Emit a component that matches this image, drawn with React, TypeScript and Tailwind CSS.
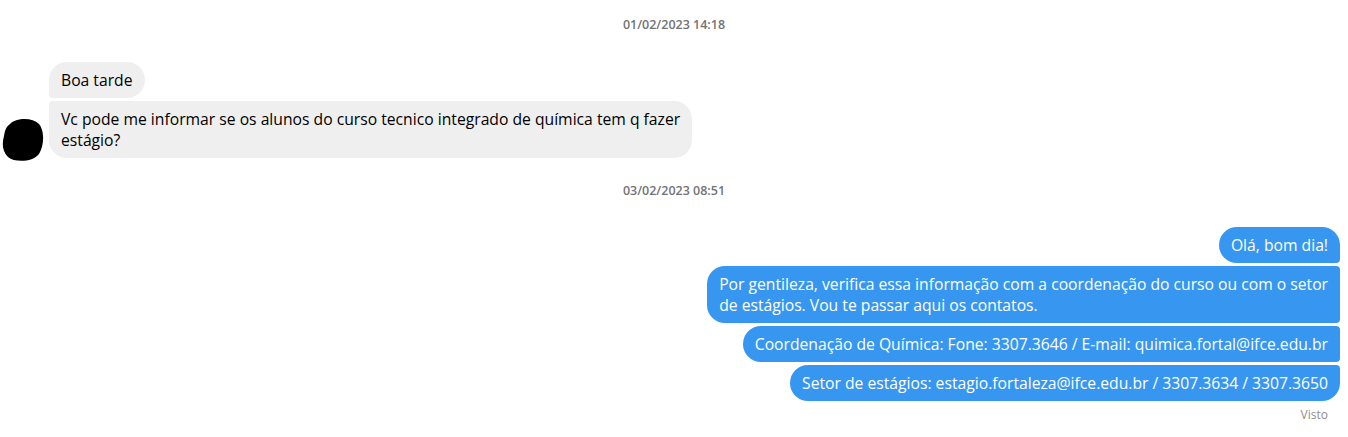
import React from "react";

function Stamp({ text }: { text: string }) {
  return (
    <div className="text-center text-[12.5px] leading-[16px] font-semibold text-[#737373]">{text}</div>
  );
}

export default function App() {
  return (
    <div className="w-[1348px] h-[437px] bg-white overflow-hidden font-['Open_Sans',Arial,sans-serif] text-[15.7px] leading-[20px]">
      <div className="pt-[17px]">
        <Stamp text="01/02/2023 14:18" />
      </div>

      <div className="mt-[29px] flex items-end pl-[2px] gap-[5px]">
        <svg width="42" height="44" viewBox="0 0 42 44" className="mb-[-4px] shrink-0">
          <path
            d="M8 6 C14 0 30 -1 37 6 C43 13 42 28 37 36 C31 44 13 45 6 39 C0 33 0 25 2 18 C3 12 4 9 8 6 Z"
            fill="#000"
          />
        </svg>
        <div className="flex flex-col items-start gap-[3px]">
          <div className="bg-[#efefef] text-[#000] px-[12px] py-[8px] rounded-[18px] rounded-bl-[4px] whitespace-nowrap">
            Boa tarde
          </div>
          <div className="bg-[#efefef] text-[#000] px-[12px] py-[8px] rounded-[18px] rounded-tl-[4px] whitespace-nowrap leading-[20.5px]">
            Vc pode me informar se os alunos do curso tecnico integrado de química tem q fazer
            <br />
            estágio?
          </div>
        </div>
      </div>

      <div className="mt-[25px]">
        <Stamp text="03/02/2023 08:51" />
      </div>

      <div className="mt-[28px] flex flex-col items-end pr-[8px] gap-[3px] text-white">
        <div className="bg-[#3797f0] px-[12px] py-[8px] rounded-[18px] rounded-br-[4px] whitespace-nowrap">
          Olá, bom dia!
        </div>
        <div className="bg-[#3797f0] px-[12px] py-[8px] rounded-[18px] rounded-tr-[4px] rounded-br-[4px] whitespace-nowrap leading-[20.5px]">
          Por gentileza, verifica essa informação com a coordenação do curso ou com o setor
          <br />
          de estágios. Vou te passar aqui os contatos.
        </div>
        <div className="bg-[#3797f0] px-[12px] py-[8px] rounded-[18px] rounded-tr-[4px] rounded-br-[4px] whitespace-nowrap">
          Coordenação de Química: Fone: 3307.3646 / E-mail: quimica.fortal@ifce.edu.br
        </div>
        <div className="bg-[#3797f0] px-[12px] py-[8px] rounded-[18px] rounded-tr-[4px] whitespace-nowrap">
          Setor de estágios: estagio.fortaleza@ifce.edu.br / 3307.3634 / 3307.3650
        </div>
        <div className="pr-[12px] mt-[3px] text-[12px] leading-[16px] text-[#8e8e8e]">Visto</div>
      </div>
    </div>
  );
}
